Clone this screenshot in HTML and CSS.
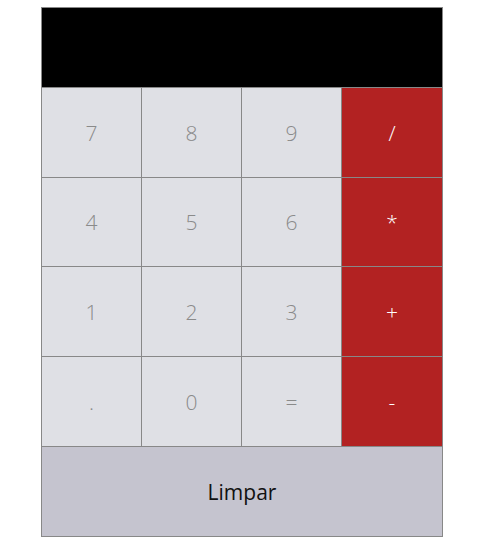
FILE: index.html
```html
<!DOCTYPE html>
<html>
<head>
<meta charset="utf-8">
<link rel="stylesheet" href="styles.css">
</head>
<body>
<div class="calc">
  <div class="display"></div>
  <button class="key">7</button>
  <button class="key">8</button>
  <button class="key">9</button>
  <button class="key op">/</button>
  <button class="key">4</button>
  <button class="key">5</button>
  <button class="key">6</button>
  <button class="key op">*</button>
  <button class="key">1</button>
  <button class="key">2</button>
  <button class="key">3</button>
  <button class="key op">+</button>
  <button class="key">.</button>
  <button class="key">0</button>
  <button class="key">=</button>
  <button class="key op">-</button>
  <button class="clear">Limpar</button>
</div>
</body>
</html>
```
FILE: styles.css
```css
html, body {
  margin: 0;
  padding: 0;
  background: #fff;
}
body {
  padding: 7px 0 0 41px;
  font-family: "Open Sans", "DejaVu Sans", sans-serif;
}
.calc {
  width: 400px;
  border: 1px solid #888;
  background: #888;
  display: grid;
  grid-template-columns: 99px 99px 99px 100px;
  grid-template-rows: 79px 89px 88px 89px 89px 89px;
  gap: 1px;
}
.display {
  grid-column: 1 / -1;
  background: #000;
}
.key {
  border: none;
  margin: 0;
  padding: 0;
  background: #dfe0e5;
  color: #8a8a8a;
  font-family: inherit;
  font-size: 21px;
  font-weight: 300;
}
.key.op {
  background: #b22222;
  color: #fff;
}
.clear {
  grid-column: 1 / -1;
  border: none;
  margin: 0;
  padding: 0;
  background: #c5c4cf;
  color: #111;
  font-family: inherit;
  font-size: 21px;
  font-weight: 400;
}
```
